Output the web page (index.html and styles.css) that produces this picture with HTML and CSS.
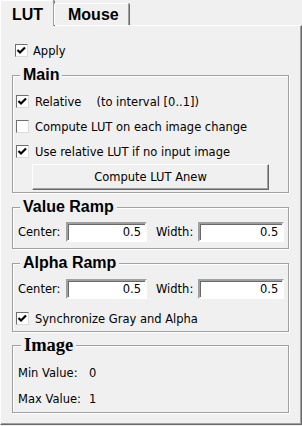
FILE: index.html
```html
<!DOCTYPE html>
<html lang="en">
<head>
    <meta charset="UTF-8">
    <title>LUT</title>
    <link rel="stylesheet" href="styles.css">
</head>
<body>
    <div class="tabs">
        <div class="tab active">LUT</div>
        <div class="tab">Mouse</div>
    </div>

    <div class="panel">
        <div class="check apply">
            <span class="box"><svg width="11" height="11" viewBox="0 0 11 11"><path d="M1.5 5 L4 7.5 L9 2.5" fill="none" stroke="#000" stroke-width="2.2"/></svg></span>
            Apply
        </div>

        <fieldset class="group main">
            <legend>Main</legend>
            <div class="check row">
                <span class="box"><svg width="11" height="11" viewBox="0 0 11 11"><path d="M1.5 5 L4 7.5 L9 2.5" fill="none" stroke="#000" stroke-width="2.2"/></svg></span>
                Relative <span class="hint">(to interval [0..1])</span>
            </div>
            <div class="check row">
                <span class="box"></span>
                Compute LUT on each image change
            </div>
            <div class="check row">
                <span class="box"><svg width="11" height="11" viewBox="0 0 11 11"><path d="M1.5 5 L4 7.5 L9 2.5" fill="none" stroke="#000" stroke-width="2.2"/></svg></span>
                Use relative LUT if no input image
            </div>
            <button class="btn">Compute LUT Anew</button>
        </fieldset>

        <fieldset class="group ramp">
            <legend>Value Ramp</legend>
            <div class="fields">
                <span class="lbl">Center:</span>
                <span class="input center">0.5</span>
                <span class="lbl width">Width:</span>
                <span class="input wide">0.5</span>
            </div>
        </fieldset>

        <fieldset class="group ramp alpha">
            <legend>Alpha Ramp</legend>
            <div class="fields">
                <span class="lbl">Center:</span>
                <span class="input center">0.5</span>
                <span class="lbl width">Width:</span>
                <span class="input wide">0.5</span>
            </div>
            <div class="check sync">
                <span class="box"><svg width="11" height="11" viewBox="0 0 11 11"><path d="M1.5 5 L4 7.5 L9 2.5" fill="none" stroke="#000" stroke-width="2.2"/></svg></span>
                Synchronize Gray and Alpha
            </div>
        </fieldset>

        <fieldset class="group image">
            <legend>Image</legend>
            <div class="stat"><span class="stat-name">Min Value:</span>0</div>
            <div class="stat"><span class="stat-name">Max Value:</span>1</div>
        </fieldset>
    </div>
</body>
</html>
```

FILE: styles.css
```css
body {
    margin: 0;
    width: 302px;
    height: 426px;
    overflow: hidden;
    background: #f0f0f0;
    color: #000;
    font-family: "DejaVu Sans", sans-serif;
    font-size: 11.5px;
}

/* tab strip */
.tabs {
    display: flex;
    align-items: flex-end;
    height: 25px;
    position: relative;
    z-index: 1;
}

.tab {
    box-sizing: border-box;
    width: 75px;
    height: 22px;
    padding: 2px 0 0 13px;
    font: bold 16px/18px "Liberation Sans", sans-serif;
    border-top: 1px solid #fff;
    border-left: 1px solid #fff;
    border-right: 1px solid #a0a0a0;
    box-shadow: 1px 0 0 #696969;
    border-radius: 2px 2px 0 0;
}

.tab.active {
    width: 54px;
    height: 26px;
    margin-bottom: -1px;
    padding: 5px 0 0 11px;
    background: #f0f0f0;
}

/* page body */
.panel {
    box-sizing: border-box;
    height: 400px;
    border-top: 1px solid #fff;
    border-left: 1px solid #fff;
    border-right: 1px solid #696969;
    border-bottom: 1px solid #696969;
    box-shadow: inset -1px -1px 0 #a0a0a0;
    padding-top: 18px;
}

.check {
    display: flex;
    align-items: center;
    gap: 5px;
}

.box {
    box-sizing: border-box;
    width: 13px;
    height: 13px;
    flex: none;
    background: #fff;
    border: 1px solid;
    border-color: #6e6e6e #dcdcdc #dcdcdc #6e6e6e;
    display: flex;
    align-items: center;
    justify-content: center;
}

.apply {
    height: 13px;
    margin-left: 14px;
}

.group {
    box-sizing: border-box;
    width: 277px;
    margin: 9px 0 0 11px;
    padding: 0 4px;
    border: 1px solid #a0a0a0;
    box-shadow: inset 1px 1px 0 #fff, 1px 1px 0 #fff;
}

.group legend {
    margin-left: 3px;
    padding: 0 3px;
    background: #f0f0f0;
    font: bold 16px/18px "Liberation Sans", sans-serif;
}

.group + .group {
    margin-top: 5px;
}

.main {
    padding-top: 5px;
    padding-bottom: 2px;
}

.row {
    height: 25px;
    margin-left: -1px;
    gap: 6px;
}

.hint {
    margin-left: 9px;
}

.btn {
    display: block;
    box-sizing: border-box;
    width: 237px;
    height: 26px;
    margin-left: 15px;
    padding: 0;
    background: #f0f0f0;
    border: 1px solid;
    border-color: #fff #696969 #696969 #fff;
    box-shadow: inset -1px -1px 0 #a0a0a0;
    font-family: "DejaVu Sans", sans-serif;
    font-size: 11.5px;
    color: #000;
}

.ramp {
    padding-top: 6px;
    padding-bottom: 6px;
}

.fields {
    display: flex;
    align-items: center;
}

.lbl {
    width: 48px;
    margin-left: 1px;
}

.lbl.width {
    width: auto;
    margin-left: 9px;
    margin-right: 5px;
}

.input {
    box-sizing: border-box;
    height: 20px;
    padding: 0 4px;
    line-height: 16px;
    text-align: right;
    background: #fff;
    border: 2px solid;
    border-color: #a0a0a0 #fff #fff #a0a0a0;
    box-shadow: inset 1px 1px 0 #696969;
}

.input.center {
    width: 81px;
}

.input.wide {
    width: 86px;
}

.alpha {
    padding-top: 7px;
    padding-bottom: 6px;
}

.sync {
    margin: 13px 0 0 -1px;
    height: 13px;
    gap: 6px;
}

.group.image {
    margin-top: 3px;
    padding: 5px 4px 0 5px;
}

.image legend {
    font: bold 18.5px/20px "Liberation Serif", serif;
}

.stat {
    height: 26px;
    line-height: 26px;
}

.stat-name {
    display: inline-block;
    width: 71px;
}
```
